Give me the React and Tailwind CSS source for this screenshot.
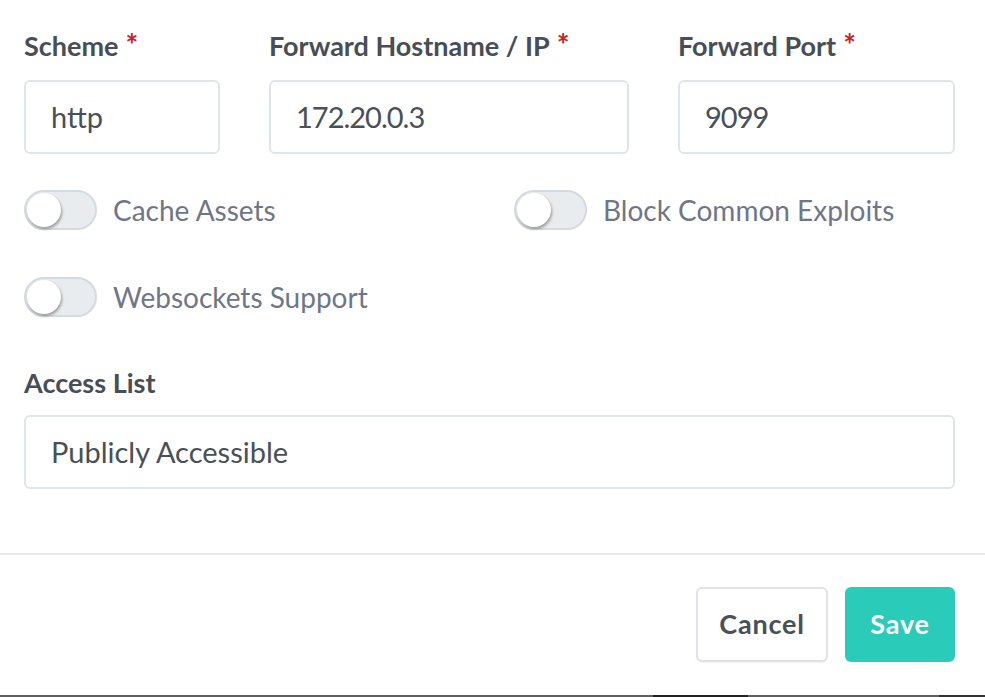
import React from "react";

const font = { fontFamily: "Lato, 'Noto Sans', sans-serif" };

function Label({ children, required }) {
  return (
    <div className="h-[28px] text-[27px] leading-[28px] font-bold text-[#474e56] whitespace-nowrap">
      {children}
      {required && <span className="ml-[7px] text-[30px] leading-[18px] text-[#cd201f]">*</span>}
    </div>
  );
}

function Input({ value, tight }) {
  return (
    <div
      className={
        tight
          ? "h-[74px] rounded-[6px] border-2 border-[#e0e5ec] bg-white pl-[25px] flex items-center text-[29px] tracking-[-1px] text-[#495057]"
          : "h-[74px] rounded-[6px] border-2 border-[#e0e5ec] bg-white pl-[25px] flex items-center text-[29px] text-[#495057]"
      }
    >
      {value}
    </div>
  );
}

function Toggle({ label }) {
  return (
    <div className="flex items-center h-[40px]">
      <div className="relative w-[73px] h-[40px] rounded-full bg-[#e9ecef] border-2 border-[#d5dae1]">
        <div className="absolute left-[1px] top-[1px] w-[34px] h-[34px] rounded-full bg-white shadow-[1px_2px_3px_0_rgba(0,0,0,0.35)]" />
      </div>
      <span className="ml-[16px] text-[28px] text-[#6e7687] whitespace-nowrap">{label}</span>
    </div>
  );
}

export default function App() {
  return (
    <div style={font} className="w-[985px] h-[697px] bg-white flex flex-col overflow-hidden">
      <div className="pl-[24px] pr-[30px] pt-[32px]">
        <div className="grid grid-cols-[196px_360px_1fr] gap-x-[49px]">
          <div>
            <Label required>Scheme</Label>
            <div className="mt-[20px]"><Input value="http" /></div>
          </div>
          <div>
            <Label required>Forward Hostname / IP</Label>
            <div className="mt-[20px]"><Input value="172.20.0.3" tight /></div>
          </div>
          <div>
            <Label required>Forward Port</Label>
            <div className="mt-[20px]"><Input value="9099" tight /></div>
          </div>
        </div>

        <div className="grid grid-cols-2 gap-x-[49px] mt-[36px]">
          <Toggle label="Cache Assets" />
          <Toggle label="Block Common Exploits" />
        </div>
        <div className="mt-[47px]">
          <Toggle label="Websockets Support" />
        </div>

        <div className="mt-[52px]">
          <Label>Access List</Label>
          <div className="mt-[18px]"><Input value="Publicly Accessible" /></div>
        </div>
      </div>

      <div className="mt-[64px] h-[2px] bg-[#e6e9ed]" />

      <div className="flex justify-end gap-[17px] pr-[30px] mt-[32px]">
        <button className="h-[75px] w-[132px] rounded-[6px] border-2 border-[#dfe3e9] bg-white shadow-[0_1px_2px_rgba(0,0,0,0.06)] text-[27px] font-bold tracking-[0.03em] text-[#495057]">
          Cancel
        </button>
        <button className="h-[75px] w-[110px] rounded-[6px] bg-[#2bcbba] text-[27px] font-bold tracking-[0.03em] text-white">
          Save
        </button>
      </div>

      <div className="mt-auto h-[2px] bg-[#5f5f5f] flex">
        <div className="ml-[653px] w-[95px] h-[2px] bg-[#222]" />
        <div className="ml-[191px] w-[46px] h-[2px] bg-[#333]" />
      </div>
    </div>
  );
}
